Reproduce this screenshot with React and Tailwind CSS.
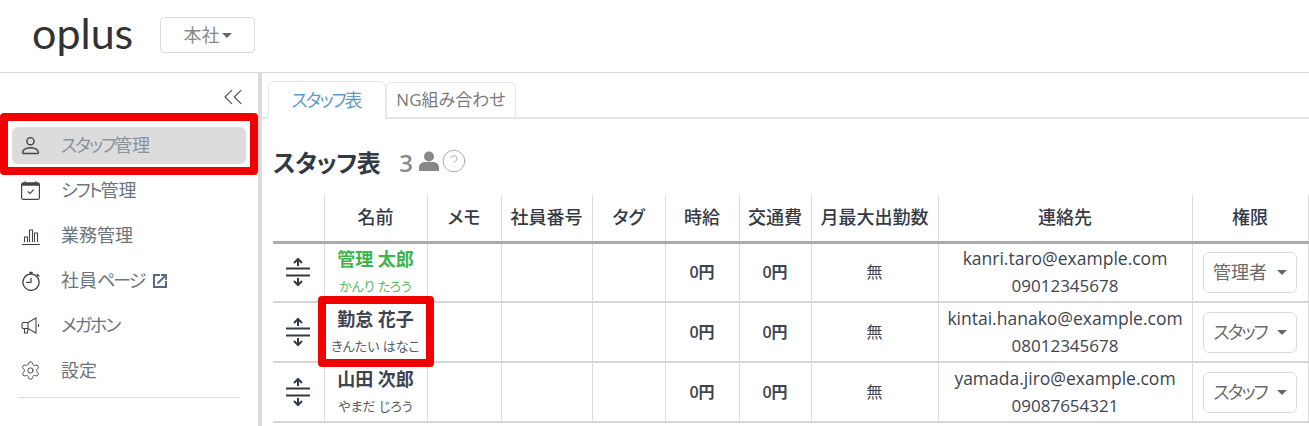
import { ChevronsLeft, Settings, CircleHelp } from "lucide-react";
import { BsPerson, BsCalendarCheck, BsStopwatch } from "react-icons/bs";

function ChartIcon({ className }) {
  return (
    <svg width="20" height="20" viewBox="0 0 20 20" fill="none" stroke="currentColor" strokeWidth="1.1" className={className}>
      <path d="M1 18.500h18" />
      <path d="M3.500 16v-5h3v5M8.500 16V4h3v12M13.500 16V7h3v9" />
    </svg>
  );
}

function MegaphoneIcon({ className }) {
  return (
    <svg width="20" height="20" viewBox="0 0 20 20" fill="none" stroke="currentColor" strokeWidth="1.1" className={className}>
      <path d="M15 2 7 6.500H2.500a1.500 1.500 0 0 0-1.500 1.500v3a1.500 1.500 0 0 0 1.500 1.500H7l8 4.500z" />
      <path d="M7 6.500v6M3.500 12.500V17h3l.5-4.500M17.500 8v3" />
    </svg>
  );
}

function ExternalIcon() {
  return (
    <svg width="14" height="14" viewBox="0 0 14 14" fill="none" stroke="#5a6a7d" strokeWidth="2">
      <path d="M7 1H1v12h12V7" />
      <path d="M4.500 9.500 12 2M8 1h5v5" strokeWidth="1.800" />
    </svg>
  );
}

const menu = [
  { label: "スタッフ管理", icon: <BsPerson size={23} />, active: true },
  { label: "シフト管理", icon: <BsCalendarCheck size={19} /> },
  { label: "業務管理", icon: <ChartIcon /> },
  { label: "社員ページ", icon: <BsStopwatch size={20} />, external: true },
  { label: "メガホン", icon: <MegaphoneIcon /> },
  { label: "設定", icon: <Settings size={21} strokeWidth={1.1} /> },
];

const heads = ["", "名前", "メモ", "社員番号", "タグ", "時給", "交通費", "月最大出勤数", "連絡先", "権限"];
const widths = ["w-[51px]", "w-[103px]", "w-[74px]", "w-[91px]", "w-[73px]", "w-[74px]", "w-[72px]", "w-[127px]", "w-[254px]", "w-[116px]"];

const staff = [
  { name: "管理 太郎", kana: "かんり たろう", mail: "kanri.taro@example.com", tel: "09012345678", role: "管理者", admin: true },
  { name: "勤怠 花子", kana: "きんたい はなこ", mail: "kintai.hanako@example.com", tel: "08012345678", role: "スタッフ" },
  { name: "山田 次郎", kana: "やまだ じろう", mail: "yamada.jiro@example.com", tel: "09087654321", role: "スタッフ" },
];

// katakana runs sit tighter than the kanji in the original font
function Tight({ text }) {
  return text.split(/([ァ-ヶー]+)/).map((part, i) =>
    i % 2 ? <span key={i} className="tracking-[-2px]">{part}</span> : part
  );
}

function Caret() {
  return <span className="inline-block border-x-[5px] border-t-[5px] border-x-transparent border-t-[#666]" />;
}

function DragIcon() {
  return (
    <svg width="26" height="30" viewBox="0 0 26 30" fill="none" stroke="#343a44" strokeWidth="2" className="mx-auto">
      <path d="M1 11.500h24M1 18.500h24" />
      <path d="M13 9V2M9 6l4-4 4 4M13 21v7M9 24l4 4 4-4" />
    </svg>
  );
}

function PersonSolid() {
  return (
    <svg width="20" height="20" viewBox="0 0 20 20" fill="#888">
      <circle cx="10" cy="5.500" r="5" />
      <path d="M0 20v-3c0-4 3-6 6-6h8c3 0 6 2 6 6v3z" />
    </svg>
  );
}

export default function App() {
  return (
    <div className="relative w-[1309px] h-[426px] overflow-hidden bg-white text-[#3d4450] [font-feature-settings:'palt'] font-['Open_Sans','Noto_Sans_CJK_JP',sans-serif]">
      <header className="h-[73px] flex items-center border-b border-[#dcdcdc]">
        <div className="w-[160px] pl-[32px] text-[43px] leading-none text-[#333] font-['Lato',sans-serif] -mt-[7px]">oplus</div>
        <button className="w-[95px] h-[36px] -mt-[2px] flex items-center justify-center gap-[2px] border border-[#dcdcdc] rounded text-[18px] text-[#888]">
          本社<Caret />
        </button>
      </header>

      <div className="flex h-[353px]">
        <aside className="w-[262px] shrink-0 border-r-[4px] border-[#dcdcdc]">
          <div className="h-[40px] flex items-end justify-end pr-[9px]">
            <ChevronsLeft size={32} strokeWidth={0.9} className="text-[#555]" />
          </div>
          <ul className="mt-[14px]">
            {menu.map(({ label, icon, active, external }) => (
              <li key={label} className={"h-[37px] mb-[8px] mx-[12px] flex items-center rounded-md text-[18px] " + (active ? "bg-[#dcdcdc] text-[#8a929c]" : "text-[#6c757d]")}>
                <span className="w-[37px] flex justify-center text-[#444] shrink-0">{icon}</span>
                <span className="ml-[12px] flex items-center gap-[9px]">
                  <span><Tight text={label} /></span>
                  {external && <ExternalIcon />}
                </span>
              </li>
            ))}
          </ul>
          <div className="mx-[18px] mt-[5px] border-t border-[#dcdcdc]" />
        </aside>

        <main className="flex-1 min-w-0">
          <div className="h-[46px] pt-[8px] pl-[6px] flex items-end border-b-2 border-[#e6e6e6]">
            <div className="w-[118px] h-[38px] -mb-[2px] flex items-center justify-center border border-b-0 border-[#e6e6e6] rounded-t-md bg-white text-[18px] text-[#5d9bc9]"><span><Tight text="スタッフ表" /></span></div>
            <div className="w-[130px] h-[35px] flex items-center justify-center border border-b-0 border-[#e6e6e6] rounded-t-md text-[17px] text-[#7a7a7a]">NG組み合わせ</div>
          </div>

          <div className="h-[76px] pl-[11px] pt-[26px] flex items-start">
            <h1 className="text-[24px] leading-[36px] font-semibold text-[#343a44] tracking-[-0.5px]">スタッフ表</h1>
            <span className="ml-[19px] text-[24px] leading-[36px] font-semibold text-[#888]">3</span>
            <span className="ml-[6px] mt-[6px]"><PersonSolid /></span>
            <CircleHelp size={26} strokeWidth={0.9} className="ml-[2px] mt-[3px] text-[#aaa]" />
          </div>

          <table className="ml-[11px] table-fixed border-collapse w-[1035px]">
            <thead>
              <tr className="h-[47px] border-b-[3px] border-[#aaaaaa]">
                {heads.map((h, i) => (
                  <th key={i} className={widths[i] + " p-0 font-medium text-[18px] text-[#343a44] border-l border-[#dcdcdc] first:border-l-0 last:border-r"}>{h}</th>
                ))}
              </tr>
            </thead>
            <tbody>
              {staff.map((s) => (
                <tr key={s.mail} className="h-[60px] border-b-2 border-[#d6d6d6] font-semibold text-center text-[16px]">
                  <td className="p-0"><DragIcon /></td>
                  <td className={"p-0 border-l border-[#dcdcdc] " + (s.admin ? "text-[#3cb54a]" : "")}>
                    <div className="text-[18px] leading-[28px] -mt-[1px]">{s.name}</div>
                    <div className={"text-[13px] leading-[26px] font-normal " + (s.admin ? "text-[#5ab963]" : "text-[#555b66]")}>{s.kana}</div>
                  </td>
                  <td className="border-l border-[#dcdcdc]" />
                  <td className="border-l border-[#dcdcdc]" />
                  <td className="border-l border-[#dcdcdc]" />
                  <td className="p-0 border-l border-[#dcdcdc]">0円</td>
                  <td className="p-0 border-l border-[#dcdcdc]">0円</td>
                  <td className="p-0 border-l border-[#dcdcdc] font-normal">無</td>
                  <td className="p-0 border-l border-[#dcdcdc] font-medium text-[17.500px] leading-[27px]">
                    <div>{s.mail}</div>
                    <div className="text-[17px]">{s.tel}</div>
                  </td>
                  <td className="p-0 border-x border-[#dcdcdc] font-normal">
                    <div className="mx-auto w-[94px] h-[41px] flex items-center justify-center gap-[10px] border border-[#dcdcdc] rounded-md text-[18px] text-[#6a6a6a]">
                      <span><Tight text={s.role} /></span><Caret />
                    </div>
                  </td>
                </tr>
              ))}
            </tbody>
          </table>
        </main>
      </div>

      <div className="absolute left-0 top-[113px] w-[258px] h-[62px] border-[8px] border-[#f00000] rounded" />
      <div className="absolute left-[318px] top-[296px] w-[116px] h-[71px] border-[8px] border-[#f00000] rounded" />
    </div>
  );
}
